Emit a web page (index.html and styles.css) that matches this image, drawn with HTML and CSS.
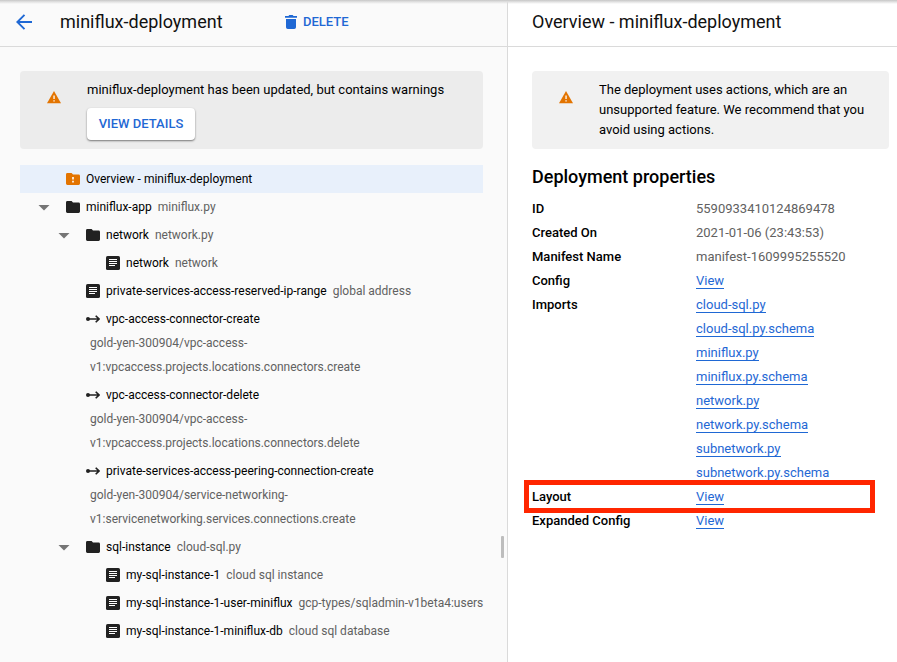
FILE: index.html
```html
<!DOCTYPE html>
<html lang="en">
<head>
<meta charset="utf-8">
<title>miniflux-deployment</title>
<link rel="stylesheet" href="styles.css">
</head>
<body>
<svg class="sprite" aria-hidden="true">
  <symbol id="warn" viewBox="0 0 14 13"><path d="M7 0 14 12.200H0Z" fill="#e37400"/><path d="M6.400 4.600h1.300v3.400H6.400zM6.400 9.200h1.300v1.400H6.400z" fill="#fff"/></symbol>
  <symbol id="folder" viewBox="0 0 14 14"><path d="M1.400 1H5.600L7 2.600h5.600A1.400 1.400 0 0 1 14 4v7.600A1.400 1.400 0 0 1 12.600 13H1.400A1.400 1.400 0 0 1 0 11.600V2.400A1.400 1.400 0 0 1 1.400 1Z"/></symbol>
  <symbol id="doc" viewBox="0 0 14 14"><rect width="14" height="14" rx="1.600"/><path d="M3 3.500h8M3 5.500h8M3 7.500h8M3 9.500h6" stroke="#fff" stroke-width="1"/></symbol>
  <symbol id="action" viewBox="0 0 14 14"><circle cx="2" cy="7" r="2"/><path d="M2 7h11M9.700 3.700 13 7 9.700 10.300" fill="none" stroke="#212121" stroke-width="1.600"/></symbol>
</svg>
<div class="app">
  <section class="pane pane-left">
    <header class="bar">
      <svg class="back" viewBox="0 0 16 16"><path d="M16 8H1.500M8.500 .8 1.300 8l7.200 7.200" fill="none" stroke="#1f68d4" stroke-width="1.900"/></svg>
      <h1 class="title">miniflux-deployment</h1>
      <span class="delete"><svg class="trash" viewBox="0 0 12 14"><path d="M0 1h3.500L4.300 0h3.400l.8 1H12v1.700H0zM1 4h10v8.200A1.800 1.800 0 0 1 9.200 14H2.800A1.800 1.800 0 0 1 1 12.200z" fill="#1f68d4"/></svg>DELETE</span>
    </header>
    <div class="content">
      <div class="notice">
        <svg class="warn"><use href="#warn"/></svg>
        <div class="notice-body">
          <p>miniflux-deployment has been updated, but contains warnings</p>
          <button class="details">VIEW DETAILS</button>
        </div>
      </div>
      <div class="tree">
        <div class="row selected"><span class="caret"></span><svg class="icon" viewBox="0 0 14 14"><use href="#folder" fill="#e37400"/><path d="M6.200 5h1.600v2.600H6.200zM6.200 8.800h1.600v1.600H6.200z" fill="#fff"/></svg><span>Overview - miniflux-deployment</span></div>
        <div class="row"><span class="caret open"></span><svg class="icon"><use href="#folder"/></svg><b>miniflux-app</b><span class="kind">miniflux.py</span></div>
        <div class="row l2"><span class="caret open"></span><svg class="icon"><use href="#folder"/></svg><b>network</b><span class="kind">network.py</span></div>
        <div class="row l3"><span class="caret"></span><svg class="icon"><use href="#doc"/></svg><b>network</b><span class="kind">network</span></div>
        <div class="row l2"><span class="caret"></span><svg class="icon"><use href="#doc"/></svg><b>private-services-access-reserved-ip-range</b><span class="kind">global address</span></div>
        <div class="row l2"><span class="caret"></span><svg class="icon"><use href="#action"/></svg><b>vpc-access-connector-create</b></div>
        <div class="sub">gold-yen-300904/vpc-access-<br>v1:vpcaccess.projects.locations.connectors.create</div>
        <div class="row l2"><span class="caret"></span><svg class="icon"><use href="#action"/></svg><b>vpc-access-connector-delete</b></div>
        <div class="sub">gold-yen-300904/vpc-access-<br>v1:vpcaccess.projects.locations.connectors.delete</div>
        <div class="row l2"><span class="caret"></span><svg class="icon"><use href="#action"/></svg><b>private-services-access-peering-connection-create</b></div>
        <div class="sub">gold-yen-300904/service-networking-<br>v1:servicenetworking.services.connections.create</div>
        <div class="row l2"><span class="caret open"></span><svg class="icon"><use href="#folder"/></svg><b>sql-instance</b><span class="kind">cloud-sql.py</span></div>
        <div class="row l3"><span class="caret"></span><svg class="icon"><use href="#doc"/></svg><b>my-sql-instance-1</b><span class="kind">cloud sql instance</span></div>
        <div class="row l3"><span class="caret"></span><svg class="icon"><use href="#doc"/></svg><b>my-sql-instance-1-user-miniflux</b><span class="kind">gcp-types/sqladmin-v1beta4:users</span></div>
        <div class="row l3"><span class="caret"></span><svg class="icon"><use href="#doc"/></svg><b>my-sql-instance-1-miniflux-db</b><span class="kind">cloud sql database</span></div>
      </div>
    </div>
    <span class="grip"></span>
  </section>
  <section class="pane pane-right">
    <header class="bar"><h1 class="title">Overview - miniflux-deployment</h1></header>
    <div class="content">
      <div class="notice">
        <svg class="warn"><use href="#warn"/></svg>
        <div class="notice-body"><p>The deployment uses actions, which are an<br>unsupported feature. We recommend that you<br>avoid using actions.</p></div>
      </div>
      <h2 class="heading">Deployment properties</h2>
      <dl class="props">
        <dt>ID</dt><dd>5590933410124869478</dd>
        <dt>Created On</dt><dd>2021-01-06 (23:43:53)</dd>
        <dt>Manifest Name</dt><dd>manifest-1609995255520</dd>
        <dt>Config</dt><dd><a>View</a></dd>
        <dt>Imports</dt><dd><a>cloud-sql.py</a></dd>
        <dd><a>cloud-sql.py.schema</a></dd>
        <dd><a>miniflux.py</a></dd>
        <dd><a>miniflux.py.schema</a></dd>
        <dd><a>network.py</a></dd>
        <dd><a>network.py.schema</a></dd>
        <dd><a>subnetwork.py</a></dd>
        <dd><a>subnetwork.py.schema</a></dd>
        <dt class="marked">Layout</dt><dd><a>View</a></dd>
        <dt>Expanded Config</dt><dd><a>View</a></dd>
      </dl>
    </div>
  </section>
</div>
</body>
</html>
```
FILE: styles.css
```css
*, *::before, *::after { box-sizing: border-box; }
body { margin: 0; font-family: Roboto, "Liberation Sans", sans-serif; font-size: 13px; color: #000; background: #fff; }
h1, h2, p, dl, dd { margin: 0; }
.sprite { display: none; }
.app { display: flex; width: 897px; height: 662px; overflow: hidden; position: relative; }
.app::before { content: ""; position: absolute; z-index: 2; inset: 0 0 auto; height: 4px; background: linear-gradient(#c6c6c6, #dedede 40%, rgba(240,240,240,0)); }
.pane-left { width: 508px; background: #fafafa; border-right: 1px solid #dadada; position: relative; }
.pane-right { flex: 1; }
.bar { height: 47px; display: flex; align-items: center; border-bottom: 1px solid #dadada; padding-bottom: 3px; }
.pane-left .bar { padding-left: 16px; }
.pane-right .bar { padding-left: 24px; }
.back { width: 16px; height: 16px; margin-right: 28px; }
.title { font-size: 18px; font-weight: 400; line-height: 24px; white-space: nowrap; color: #111; }
.pane-left .title { width: 225px; }
.delete { display: flex; align-items: center; font-size: 13px; font-weight: 500; color: #1f68d4; }
.trash { width: 12px; height: 14px; margin-right: 6px; }
.pane-left .content { padding: 24px 24px 0 20px; }
.pane-right .content { padding: 24px 8px 0 24px; }
.notice { height: 78px; border-radius: 4px; background: #ececec; display: flex; padding-left: 27px; }
.pane-right .notice { background: #f1f1f1; }
.warn { width: 14px; height: 13px; margin: 20px 26px 0 0; flex: none; }
.notice-body { padding-top: 9px; line-height: 20px; white-space: nowrap; }
.details { display: block; width: 108px; height: 32px; margin-top: 8px; padding: 0 0 2px; border: 0; border-radius: 4px; background: #fff; color: #1f68d4; font: 500 13px Roboto, sans-serif; box-shadow: 0 1px 2px rgba(0,0,0,.5); }
.tree { margin-top: 16px; font-size: 12px; white-space: nowrap; }
.row { height: 28px; display: flex; align-items: center; padding-left: 18px; }
.row b { font-weight: 400; }
.selected { background: #e8f0fb; }
.l2 { padding-left: 38px; }
.l3 { padding-left: 58px; }
.caret { width: 12px; margin-right: 16px; flex: none; }
.open { height: 6px; margin-top: 1px; background: #757575; clip-path: polygon(0 0, 100% 0, 50% 100%); }
.icon { width: 14px; height: 14px; margin-right: 6px; flex: none; fill: #212121; }
.kind { margin-left: 6px; color: #616161; }
.sub { margin: -2px 0 2px 70px; line-height: 24px; color: #616161; }
.grip { position: absolute; left: 501px; top: 536px; width: 3px; height: 22px; border-radius: 1px; background: #bdbdbd; }
.heading { margin: 16px 0 8px; font-size: 18px; line-height: 24px; font-weight: 500; }
.props { display: grid; grid-template-columns: 164px 1fr; grid-auto-rows: 24px; line-height: 24px; }
.props dt { grid-column: 1; font-weight: 500; }
.props dd { grid-column: 2; color: #616161; }
.props a { color: #1f68d4; border-bottom: 1px solid #1f68d4; }
.marked { position: relative; }
.marked::after { content: ""; position: absolute; left: -8px; top: -5px; width: 351px; height: 33px; border: 5px solid #ff2600; }
```
